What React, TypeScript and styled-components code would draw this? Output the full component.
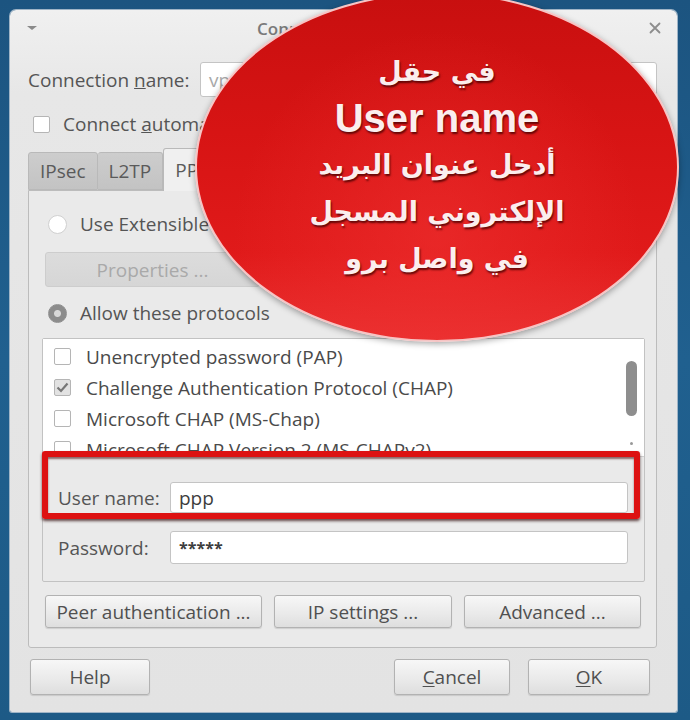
import styled, { createGlobalStyle } from "styled-components";

const Global = createGlobalStyle`
  html, body {
    margin: 0;
    padding: 0;
  }
  body {
    width: 690px;
    height: 720px;
    overflow: hidden;
    background: linear-gradient(180deg, #1c5480 0%, #20608f 50%, #1d5a86 100%);
    font-family: "Open Sans", "Noto Sans", sans-serif;
    color: #4d4d4d;
  }
`;

const Desktop = styled.div`
  position: relative;
  width: 690px;
  height: 720px;
  padding: 10px 13px 8px 10px;
  box-sizing: border-box;
`;

const Window = styled.div`
  height: 702px;
  display: flex;
  flex-direction: column;
  background: linear-gradient(180deg, #f0f0f0 0%, #e7e7e7 12%, #e3e3e3 100%);
  border-radius: 6px 6px 2px 2px;
  box-shadow: 0 0 0 1px #9fb4c6;
  overflow: hidden;
`;

const TitleBar = styled.div`
  height: 36px;
  flex-shrink: 0;
  display: flex;
  align-items: center;
  justify-content: space-between;
  padding: 0 16px 0 16px;
  font-size: 17px;
  font-weight: 600;
  color: #7a7a7a;
`;

const Title = styled.span`
  flex: 1;
  text-align: center;
  padding-right: 10px;
`;

const Content = styled.div`
  flex: 1;
  display: flex;
  flex-direction: column;
  padding: 0 20px 0 18px;
  font-size: 19px;
  white-space: nowrap;
`;

const FieldRow = styled.div<{ $top?: number; $indent?: number }>`
  display: flex;
  align-items: center;
  margin-top: ${(p) => p.$top ?? 0}px;
  padding-left: ${(p) => p.$indent ?? 0}px;
`;

const Label = styled.label<{ $width: number }>`
  width: ${(p) => p.$width}px;
  flex-shrink: 0;
  font-size: 19px;
  color: #555;
`;

const Input = styled.div<{ $height: number; $muted?: boolean; $small?: boolean }>`
  flex: 1;
  height: ${(p) => p.$height}px;
  box-sizing: border-box;
  background: #fff;
  border: 1px solid #c4c4c4;
  border-radius: 3px;
  display: flex;
  align-items: center;
  padding-left: 8px;
  font-size: ${(p) => (p.$small ? 16 : 19)}px;
  font-weight: ${(p) => (p.$small ? 700 : 400)};
  color: ${(p) => (p.$muted ? "#a8a8a8" : "#3d3d3d")};
  overflow: hidden;
`;

const Check = styled.span<{ $checked?: boolean }>`
  width: 17px;
  height: 17px;
  box-sizing: border-box;
  border: 1px solid #b5b5b5;
  border-radius: 2px;
  background: ${(p) => (p.$checked ? "#e2e2e2" : "#fff")};
  display: inline-flex;
  align-items: center;
  justify-content: center;
  flex-shrink: 0;
`;

const CheckRow = styled.div`
  height: 24px;
  display: flex;
  align-items: center;
  gap: 13px;
  margin-top: 15px;
  padding-left: 5px;
  color: #555;
`;

const Tabs = styled.div`
  display: flex;
  align-items: flex-end;
  margin-top: 12px;
  height: 42px;
  flex-shrink: 0;
`;

const Tab = styled.div<{ $active?: boolean }>`
  height: ${(p) => (p.$active ? 43 : 38)}px;
  box-sizing: border-box;
  padding: 0 11px;
  display: flex;
  align-items: center;
  border: 1px solid #b9b9b9;
  border-bottom: ${(p) => (p.$active ? "none" : "1px solid #b9b9b9")};
  border-left: ${(p) => (p.$active ? "1px solid #b9b9b9" : "none")};
  border-radius: 3px 3px 0 0;
  background: ${(p) =>
    p.$active ? "#f0f0f0" : "linear-gradient(180deg, #cdcdcd, #c3c3c3)"};
  color: #5a5a5a;
  margin-bottom: ${(p) => (p.$active ? -1 : 0)}px;
  position: relative;
  &:first-child {
    border-left: 1px solid #b9b9b9;
  }
`;

const Panel = styled.div`
  height: 458px;
  flex-shrink: 0;
  box-sizing: border-box;
  background: #eaeaea;
  border: 1px solid #bcbcbc;
  border-radius: 0 0 3px 3px;
  padding: 18px 11px 0 13px;
  display: flex;
  flex-direction: column;
`;

const Radio = styled.span<{ $on?: boolean }>`
  width: 19px;
  height: 19px;
  box-sizing: border-box;
  border-radius: 50%;
  border: 1px solid ${(p) => (p.$on ? "#8f8f8f" : "#d0d0d0")};
  background: ${(p) =>
    p.$on ? "radial-gradient(circle, #d8d8d8 0 3px, #8c8c8c 4px)" : "#fff"};
  flex-shrink: 0;
`;

const RadioRow = styled.div<{ $top: number }>`
  height: 30px;
  display: flex;
  align-items: center;
  gap: 13px;
  padding-left: 6px;
  margin-top: ${(p) => p.$top}px;
  color: #555;
`;

const Button = styled.button<{ $width: number; $height: number; $disabled?: boolean }>`
  width: ${(p) => p.$width}px;
  height: ${(p) => p.$height}px;
  flex-shrink: 0;
  font-family: "Open Sans", "Noto Sans", sans-serif;
  font-size: 19px;
  color: ${(p) => (p.$disabled ? "#a9a9a9" : "#505050")};
  background: ${(p) =>
    p.$disabled
      ? "linear-gradient(180deg, #dcdcdc, #d6d6d6)"
      : "linear-gradient(180deg, #f7f7f7 0%, #e9e9e9 60%, #dedede 100%)"};
  border: 1px solid ${(p) => (p.$disabled ? "#cdcdcd" : "#b2b2b2")};
  border-radius: 3px;
  box-shadow: ${(p) => (p.$disabled ? "none" : "0 1px 1px rgba(0,0,0,0.12)")};
  padding: 0;
  white-space: nowrap;
  u {
    text-decoration: underline;
    text-underline-offset: 2px;
  }
`;

const GroupFrame = styled.div`
  margin-top: 10px;
  height: 244px;
  flex-shrink: 0;
  box-sizing: border-box;
  border: 1px solid #c2c2c2;
  border-radius: 2px;
  display: flex;
  flex-direction: column;
`;

const ListBox = styled.div`
  height: 118px;
  flex-shrink: 0;
  background: #fff;
  border-bottom: 1px solid #d0d0d0;
  overflow: hidden;
  position: relative;
  padding-top: 2px;
  box-sizing: border-box;
`;

const ListItem = styled.div`
  height: 31px;
  display: flex;
  align-items: center;
  gap: 15px;
  padding-left: 11px;
  color: #4a4a4a;
`;

const ScrollThumb = styled.div`
  position: absolute;
  right: 7px;
  top: 22px;
  width: 11px;
  height: 55px;
  border-radius: 6px;
  background: #8e8e8e;
`;

const ScrollDot = styled.div`
  position: absolute;
  right: 11px;
  top: 103px;
  width: 3px;
  height: 3px;
  border-radius: 50%;
  background: #999;
`;

const Credentials = styled.div`
  display: flex;
  flex-direction: column;
  padding: 0 16px 0 15px;
`;

const Highlighted = styled.div`
  position: relative;
  padding-top: 25px;
`;

const RedBox = styled.div`
  position: absolute;
  left: -16px;
  right: -12px;
  top: -6px;
  bottom: -6px;
  border: 6px solid #dd1212;
  border-radius: 3px;
  box-shadow: 0 2px 3px rgba(40, 0, 0, 0.7), inset 0 2px 2px rgba(60, 0, 0, 0.55);
  pointer-events: none;
`;

const ButtonRow = styled.div<{ $top: number; $gap: number }>`
  display: flex;
  gap: ${(p) => p.$gap}px;
  margin-top: ${(p) => p.$top}px;
  padding-left: 3px;
`;

const Footer = styled.div`
  display: flex;
  align-items: center;
  margin-top: 11px;
  padding: 0 7px 0 2px;
  gap: 18px;
`;

const Spacer = styled.div`
  flex: 1;
`;

const Bubble = styled.div`
  position: absolute;
  left: 195px;
  top: -8px;
  width: 484px;
  height: 350px;
  box-sizing: border-box;
  border-radius: 50%;
  border: 2px solid #f6c4c4;
  background: radial-gradient(
      ellipse at 50% 70%,
      rgba(240, 50, 50, 0.55) 0%,
      rgba(240, 50, 50, 0) 60%
    ),
    linear-gradient(180deg, #c80f0f 0%, #d71414 40%, #e01a1a 75%, #ea3030 100%);
  box-shadow: 0 2px 6px rgba(0, 0, 0, 0.35);
  display: flex;
  flex-direction: column;
  align-items: center;
  padding-top: 54px;
  color: #fbeeee;
  text-shadow: 1px 2px 2px rgba(70, 0, 0, 0.8);
`;

const ArabicLine = styled.div<{ $size: number }>`
  font-family: "DejaVu Sans", "Noto Sans", sans-serif;
  font-weight: bold;
  font-size: ${(p) => p.$size}px;
  line-height: 47px;
  direction: rtl;
`;

const LatinLine = styled.div`
  font-family: "Liberation Sans", Arial, sans-serif;
  font-weight: bold;
  font-size: 40px;
  line-height: 46px;
`;

const Caret = () => (
  <svg width="12" height="8" viewBox="0 0 12 8">
    <path d="M1 2 L11 2 L6 6 Z" fill="#8a8a8a" />
  </svg>
);

const Close = () => (
  <svg width="12" height="12" viewBox="0 0 12 12">
    <path d="M1.5 1.5 L10.5 10.5 M10.5 1.5 L1.5 10.5" stroke="#8d8d8d" strokeWidth="1.8" strokeLinecap="round" />
  </svg>
);

const Tick = () => (
  <svg width="13" height="11" viewBox="0 0 13 11">
    <path d="M1.5 5.5 L5 9 L11.5 1.5" stroke="#777" strokeWidth="2.2" fill="none" />
  </svg>
);

const protocols = [
  { name: "Unencrypted password (PAP)", on: false },
  { name: "Challenge Authentication Protocol (CHAP)", on: true },
  { name: "Microsoft CHAP (MS-Chap)", on: false },
  { name: "Microsoft CHAP Version 2 (MS-CHAPv2)", on: false },
];

export default function App() {
  return (
    <>
      <Global />
      <Desktop>
        <Window>
          <TitleBar>
            <Caret />
            <Title>Connection settings</Title>
            <Close />
          </TitleBar>
          <Content>
            <FieldRow $top={16}>
              <Label $width={172}>
                Connection <u>n</u>ame:
              </Label>
              <Input $height={35} $muted>
                vpn connection 1
              </Input>
            </FieldRow>
            <CheckRow>
              <Check />
              <span>
                Connect <u>a</u>utomatically
              </span>
            </CheckRow>
            <Tabs>
              <Tab>IPsec</Tab>
              <Tab>L2TP</Tab>
              <Tab $active>PPP</Tab>
            </Tabs>
            <Panel>
              <RadioRow $top={0}>
                <Radio />
                <span>Use Extensible Authentication Protocol (EAP)</span>
              </RadioRow>
              <FieldRow $top={13} $indent={3}>
                <Button $width={215} $height={35} $disabled>
                  Properties ...
                </Button>
              </FieldRow>
              <RadioRow $top={11}>
                <Radio $on />
                <span>Allow these protocols</span>
              </RadioRow>
              <GroupFrame>
                <ListBox>
                  {protocols.map((p) => (
                    <ListItem key={p.name}>
                      <Check $checked={p.on}>{p.on && <Tick />}</Check>
                      <span>{p.name}</span>
                    </ListItem>
                  ))}
                  <ScrollThumb />
                  <ScrollDot />
                </ListBox>
                <Credentials>
                  <Highlighted>
                    <FieldRow>
                      <Label $width={112}>User name:</Label>
                      <Input $height={31}>ppp</Input>
                    </FieldRow>
                    <RedBox />
                  </Highlighted>
                  <FieldRow $top={18}>
                    <Label $width={112}>Password:</Label>
                    <Input $height={33} $small>
                      *****
                    </Input>
                  </FieldRow>
                </Credentials>
              </GroupFrame>
              <ButtonRow $top={13} $gap={12}>
                <Button $width={217} $height={33}>
                  Peer authentication ...
                </Button>
                <Button $width={178} $height={33}>
                  IP settings ...
                </Button>
                <Button $width={177} $height={33}>
                  Advanced ...
                </Button>
              </ButtonRow>
            </Panel>
            <Footer>
              <Button $width={120} $height={36}>
                Help
              </Button>
              <Spacer />
              <Button $width={116} $height={36}>
                <u>C</u>ancel
              </Button>
              <Button $width={122} $height={36}>
                <u>O</u>K
              </Button>
            </Footer>
          </Content>
        </Window>
        <Bubble>
          <ArabicLine $size={27}>في حقل</ArabicLine>
          <LatinLine>User name</LatinLine>
          <ArabicLine $size={27}>أدخل عنوان البريد</ArabicLine>
          <ArabicLine $size={27}>الإلكتروني المسجل</ArabicLine>
          <ArabicLine $size={27}>في واصل برو</ArabicLine>
        </Bubble>
      </Desktop>
    </>
  );
}
